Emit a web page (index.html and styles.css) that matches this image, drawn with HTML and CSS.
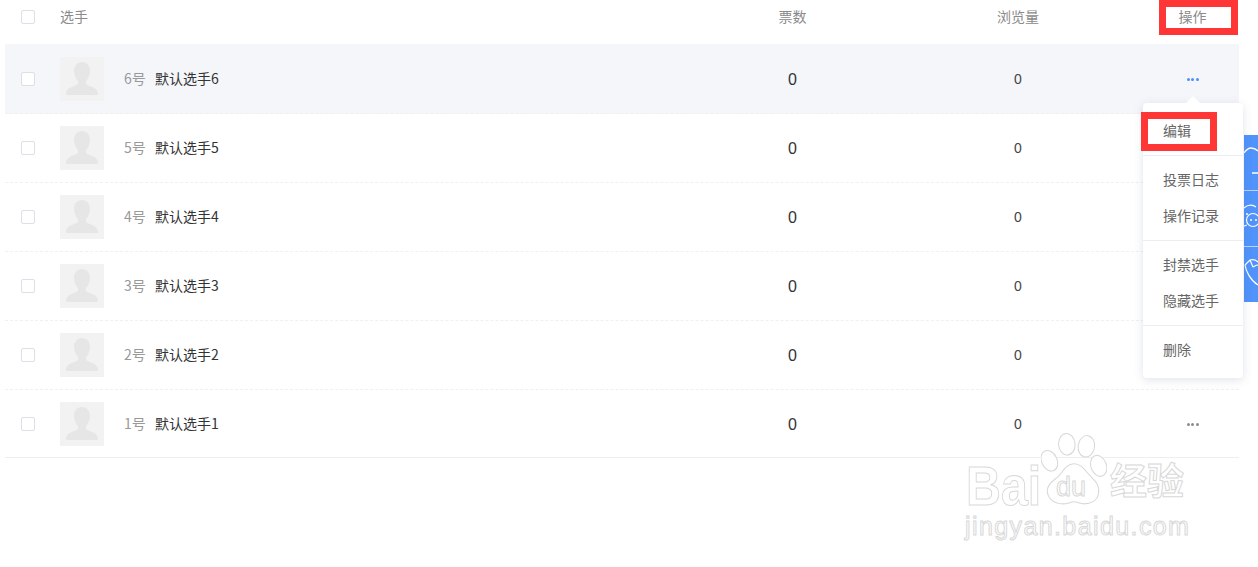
FILE: index.html
```html
<!DOCTYPE html>
<html lang="zh-CN">
<head>
<meta charset="utf-8">
<title>选手</title>
<link rel="stylesheet" href="styles.css">
</head>
<body>
<main class="list">
  <div class="row head">
    <span class="cell"><i class="check"></i></span>
    <span class="cell label">选手</span>
    <span class="cell center label">票数</span>
    <span class="cell center label">浏览量</span>
    <span class="cell center label">操作</span>
  </div>
  <div class="row item hover">
    <span class="cell"><i class="check"></i></span>
    <span class="cell player"><svg class="avatar" viewBox="0 0 44 44"><rect width="44" height="44" fill="#f2f2f2"/><path d="M22 5c5 0 8 4 8 9 0 4-2 8-4 10v3c2 2 11 3 12 9 0 1 0 2-1 2H7c-1 0-1-1-1-2 1-6 10-7 12-9v-3c-2-2-4-6-4-10 0-5 3-9 8-9z" fill="#e6e6e6"/></svg><span class="num">6号</span><span class="name">默认选手6</span></span>
    <span class="cell center votes">0</span>
    <span class="cell center views">0</span>
    <span class="cell center"><span class="dots blue"><b></b><b></b><b></b></span></span>
  </div>
  <div class="row item">
    <span class="cell"><i class="check"></i></span>
    <span class="cell player"><svg class="avatar" viewBox="0 0 44 44"><rect width="44" height="44" fill="#f2f2f2"/><path d="M22 5c5 0 8 4 8 9 0 4-2 8-4 10v3c2 2 11 3 12 9 0 1 0 2-1 2H7c-1 0-1-1-1-2 1-6 10-7 12-9v-3c-2-2-4-6-4-10 0-5 3-9 8-9z" fill="#e6e6e6"/></svg><span class="num">5号</span><span class="name">默认选手5</span></span>
    <span class="cell center votes">0</span>
    <span class="cell center views">0</span>
    <span class="cell center"></span>
  </div>
  <div class="row item">
    <span class="cell"><i class="check"></i></span>
    <span class="cell player"><svg class="avatar" viewBox="0 0 44 44"><rect width="44" height="44" fill="#f2f2f2"/><path d="M22 5c5 0 8 4 8 9 0 4-2 8-4 10v3c2 2 11 3 12 9 0 1 0 2-1 2H7c-1 0-1-1-1-2 1-6 10-7 12-9v-3c-2-2-4-6-4-10 0-5 3-9 8-9z" fill="#e6e6e6"/></svg><span class="num">4号</span><span class="name">默认选手4</span></span>
    <span class="cell center votes">0</span>
    <span class="cell center views">0</span>
    <span class="cell center"></span>
  </div>
  <div class="row item">
    <span class="cell"><i class="check"></i></span>
    <span class="cell player"><svg class="avatar" viewBox="0 0 44 44"><rect width="44" height="44" fill="#f2f2f2"/><path d="M22 5c5 0 8 4 8 9 0 4-2 8-4 10v3c2 2 11 3 12 9 0 1 0 2-1 2H7c-1 0-1-1-1-2 1-6 10-7 12-9v-3c-2-2-4-6-4-10 0-5 3-9 8-9z" fill="#e6e6e6"/></svg><span class="num">3号</span><span class="name">默认选手3</span></span>
    <span class="cell center votes">0</span>
    <span class="cell center views">0</span>
    <span class="cell center"></span>
  </div>
  <div class="row item">
    <span class="cell"><i class="check"></i></span>
    <span class="cell player"><svg class="avatar" viewBox="0 0 44 44"><rect width="44" height="44" fill="#f2f2f2"/><path d="M22 5c5 0 8 4 8 9 0 4-2 8-4 10v3c2 2 11 3 12 9 0 1 0 2-1 2H7c-1 0-1-1-1-2 1-6 10-7 12-9v-3c-2-2-4-6-4-10 0-5 3-9 8-9z" fill="#e6e6e6"/></svg><span class="num">2号</span><span class="name">默认选手2</span></span>
    <span class="cell center votes">0</span>
    <span class="cell center views">0</span>
    <span class="cell center"></span>
  </div>
  <div class="row item last">
    <span class="cell"><i class="check"></i></span>
    <span class="cell player"><svg class="avatar" viewBox="0 0 44 44"><rect width="44" height="44" fill="#f2f2f2"/><path d="M22 5c5 0 8 4 8 9 0 4-2 8-4 10v3c2 2 11 3 12 9 0 1 0 2-1 2H7c-1 0-1-1-1-2 1-6 10-7 12-9v-3c-2-2-4-6-4-10 0-5 3-9 8-9z" fill="#e6e6e6"/></svg><span class="num">1号</span><span class="name">默认选手1</span></span>
    <span class="cell center votes">0</span>
    <span class="cell center views">0</span>
    <span class="cell center"><span class="dots"><b></b><b></b><b></b></span></span>
  </div>
</main>

<aside class="side">
  <div class="side-cell"><svg viewBox="0 0 14 55"><path d="M0 18c2-3 4-5 7-5 3 0 5 1 7 3M8 38h6" fill="none" stroke="#fff" stroke-width="1.3"/></svg></div>
  <div class="side-cell"><svg viewBox="0 0 14 55"><path d="M0 17c3-3 8-4 12-1M0 35c1 0 2-1 3-1" fill="none" stroke="#fff" stroke-width="1.2"/><circle cx="9" cy="29" r="6.5" fill="#5093fb" stroke="#fff" stroke-width="1.2"/><circle cx="3" cy="23" r="1" fill="#fff"/><circle cx="7" cy="29" r="1" fill="#fff"/><circle cx="12" cy="29" r="1" fill="#fff"/></svg></div>
  <div class="side-cell"><svg viewBox="0 0 14 55"><path d="M1 18c1 6 5 15 13 20M1 18l5-5c3-1 6 0 8 2M9 20c2-1 3-2 5-2M6 13l3 7" fill="none" stroke="#fff" stroke-width="1.2"/></svg></div>
</aside>

<nav class="menu">
  <div class="group first"><a>编辑</a></div>
  <div class="group"><a>投票日志</a><a>操作记录</a></div>
  <div class="group"><a>封禁选手</a><a>隐藏选手</a></div>
  <div class="group end"><a>删除</a></div>
</nav>

<div class="mark mark-head"></div>
<div class="mark mark-edit"></div>

<div class="logo">
  <span class="logo-bai">Bai</span>
  <svg class="paw" viewBox="0 0 64 74"><g fill="#fff" stroke="#d8d8d8" stroke-width="1"><ellipse cx="25" cy="11" rx="8" ry="10.5" transform="rotate(-5 25 11)"/><ellipse cx="44" cy="13" rx="8" ry="10.5" transform="rotate(8 44 13)"/><ellipse cx="8" cy="27" rx="7.5" ry="10.5" transform="rotate(-25 8 27)"/><ellipse cx="56" cy="32" rx="7.5" ry="10.5" transform="rotate(-20 56 32)"/><path d="M32 30c8 0 11 7 16 12 5 5 9 9 8 16-1 9-9 11-14 11-4 0-7-2-10-2-3 0-6 2-11 2-7 0-15-4-15-13 0-7 7-10 11-14 4-4 7-12 15-12z"/></g></svg>
  <span class="logo-du">du</span>
  <span class="logo-cn">经验</span>
  <span class="logo-url">jingyan.baidu.com</span>
</div>
</body>
</html>
```
FILE: styles.css
```css
* { box-sizing: border-box; }
html, body { margin: 0; height: 567px; overflow: hidden; background: #fff; }
body {
  position: relative;
  font-family: "Noto Sans CJK SC", "Liberation Sans", sans-serif;
  font-size: 14px;
  color: #333;
}
.list { width: 1234px; margin-left: 5px; }
.row {
  display: grid;
  grid-template-columns: 55px 635px 195px 256px 93px;
  align-items: center;
}
.head { height: 44px; padding-bottom: 10px; color: #8a8a8a; }
.label { padding-bottom: 2px; }
.item { height: 69px; border-bottom: 1px dashed #f0f0f0; }
.hover { height: 70px; padding-top: 1px; background: #f4f6fa; }
.last { height: 68px; padding-top: 1px; border-bottom: 1px solid #eee; }
.cell { display: flex; align-items: center; }
.center { justify-content: center; }
.check {
  display: block;
  width: 14px;
  height: 14px;
  margin-left: 16px;
  background: #fff;
  border: 1px solid #dcdfe6;
  border-radius: 2px;
}
.avatar { width: 44px; height: 44px; flex: none; }
.num { margin: 0 0 2px 20px; width: 31px; color: #999; }
.name { margin-bottom: 2px; color: #333; }
.votes { padding-top: 2px; font-size: 16px; font-family: "Liberation Sans", sans-serif; color: #333; }
.views { font-size: 14px; font-family: "Liberation Sans", sans-serif; color: #444; }
.dots { display: flex; gap: 1.5px; }
.dots b { width: 3px; height: 3px; border-radius: 50%; background: #8c8c8c; }
.dots.blue b { background: #4e8ff7; }

.side {
  position: absolute;
  left: 1244px;
  top: 135px;
  width: 14px;
  height: 167px;
  display: flex;
  flex-direction: column;
  gap: 1px;
  background: #b9d3fb;
}
.side-cell { flex: 1; background: #5093fb; overflow: hidden; }
.side-cell svg { display: block; width: 14px; height: 55px; }

.menu {
  position: absolute;
  left: 1143px;
  top: 103px;
  width: 100px;
  background: #fff;
  border-radius: 4px;
  box-shadow: 0 2px 10px rgba(90, 100, 140, .18);
  color: #666;
}
.menu::before {
  content: "";
  position: absolute;
  left: 45px;
  top: -5px;
  width: 10px;
  height: 10px;
  background: #fff;
  transform: rotate(45deg);
}
.group { position: relative; padding: 6px 0; border-top: 1px solid #ebedf3; }
.group.first { padding: 10px 0 6px; border-top: 0; }
.group.end { padding-bottom: 10px; }
.group a { display: block; height: 36px; line-height: 34px; padding-left: 20px; }

.mark { position: absolute; border: 7px solid #ff3636; }
.mark-head { left: 1159px; top: 0; width: 79px; height: 35px; }
.mark-edit { left: 1141px; top: 112px; width: 76px; height: 39px; }

.logo { position: absolute; left: 960px; top: 430px; width: 240px; height: 115px; }
.logo span {
  position: absolute;
  color: #fff;
  -webkit-text-stroke: 1px #d8d8d8;
  font-family: "Liberation Sans", sans-serif;
  line-height: 1;
  white-space: nowrap;
}
.logo .logo-bai { left: 6px; top: 29px; font-size: 55px; font-weight: 700; transform: scaleX(.88); transform-origin: left; }
.paw { position: absolute; left: 81px; top: 3px; width: 66px; height: 76px; }
.logo .logo-du { left: 96px; top: 44px; font-size: 27px; }
.logo .logo-cn { left: 150px; top: 31px; font-size: 37px; font-weight: 700; font-family: "Noto Sans CJK SC", sans-serif; }
.logo .logo-url { left: 5px; top: 84px; font-size: 25px; letter-spacing: 1.4px; }
```
